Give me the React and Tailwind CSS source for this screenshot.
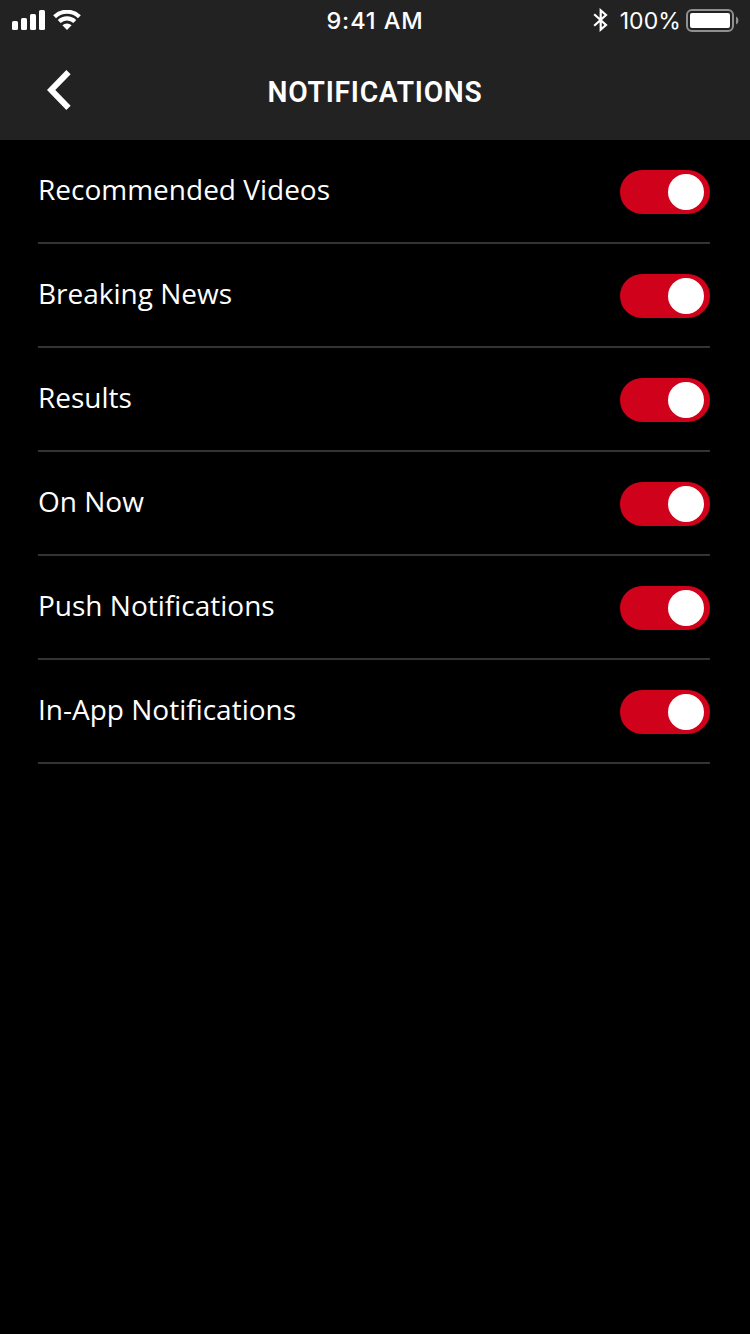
const settings = [
  "Recommended Videos",
  "Breaking News",
  "Results",
  "On Now",
  "Push Notifications",
  "In-App Notifications",
];

function SignalIcon() {
  return (
    <svg className="h-5 w-[33px]" viewBox="0 0 33 20" fill="#fff">
      <rect x="0" y="11" width="6" height="9" rx="1.5" />
      <rect x="9" y="8" width="6" height="12" rx="1.5" />
      <rect x="18" y="4" width="6" height="16" rx="1.5" />
      <rect x="27" y="0" width="6" height="20" rx="1.5" />
    </svg>
  );
}

function WifiIcon() {
  return (
    <svg className="h-5 w-7" viewBox="0 0 28 20" fill="none" stroke="#fff" strokeWidth="4.2">
      <path d="M1.6 6.7a18 18 0 0 1 24.8 0" />
      <path d="M6.2 11.5a11.4 11.4 0 0 1 15.6 0" />
      <path d="M14 20l-4.6-4.7a6.6 6.6 0 0 1 9.2 0z" fill="#fff" stroke="none" />
    </svg>
  );
}

function BluetoothIcon() {
  return (
    <svg className="h-6 w-[15px]" viewBox="0 0 15 24" fill="none" stroke="#fff" strokeWidth="2.2">
      <path d="M1.2 6.3L13 17l-5.3 4.6V2.4L13 7 1.2 17.7" />
    </svg>
  );
}

function BatteryIcon() {
  return (
    <svg className="h-6 w-[54px]" viewBox="0 0 54 24">
      <rect x="1" y="1" width="46" height="21" rx="5" fill="none" stroke="#909090" strokeWidth="2" />
      <rect x="4" y="4" width="40" height="15" rx="2" fill="#fff" />
      <path d="M50 7.5c3.2 1.3 3.2 6.7 0 8z" fill="#909090" />
    </svg>
  );
}

function Toggle() {
  return (
    <button
      type="button"
      role="switch"
      aria-checked="true"
      className="mt-[30px] flex h-11 w-[90px] shrink-0 items-center justify-end rounded-full bg-[#d0021b] pr-1.5"
    >
      <span className="size-9 rounded-full bg-white" />
    </button>
  );
}

export default function App() {
  return (
    <div className="flex h-[1334px] w-[750px] flex-col overflow-hidden bg-black font-['Open_Sans',sans-serif] text-white">
      <header className="h-[140px] shrink-0 bg-[#222222]">
        <div className="grid h-10 grid-cols-[1fr_auto_1fr] font-['Inter',sans-serif] text-[23px] leading-[42px]">
          <div className="flex items-start gap-2 pt-2.5 pl-3">
            <SignalIcon />
            <WifiIcon />
          </div>
          <div className="text-[23.5px] font-medium tracking-[0.9px] whitespace-nowrap">9:41 AM</div>
          <div className="flex justify-end">
            <div className="mt-2 mr-3 flex items-start">
              <BluetoothIcon />
            </div>
            <span className="mr-[5px] tracking-[0.1px]">100%</span>
            <div className="mt-[9px] mr-2.5 flex w-[54px] items-start">
              <BatteryIcon />
            </div>
          </div>
        </div>
        <div className="grid h-[100px] grid-cols-[100px_1fr_100px]">
          <button type="button" aria-label="Back" className="flex items-start pt-[30px] pl-[47px]">
            <svg className="h-10 w-6" viewBox="0 0 24 40" fill="none" stroke="#fff" strokeWidth="6">
              <path d="M21.5 2.2L4.2 20l17.3 17.8" />
            </svg>
          </button>
          <h1 className="flex h-[102px] scale-x-[0.94] items-center justify-center font-['Roboto',sans-serif] text-[30px] font-semibold tracking-[0.8px]">
            NOTIFICATIONS
          </h1>
        </div>
      </header>
      <main className="flex flex-col pr-10 pl-[38px]">
        {settings.map((label) => (
          <div key={label} className="flex h-[104px] justify-between border-b-2 border-[#333333]">
            <span className="pt-[29px] text-[28px] leading-10">{label}</span>
            <Toggle />
          </div>
        ))}
      </main>
    </div>
  );
}
